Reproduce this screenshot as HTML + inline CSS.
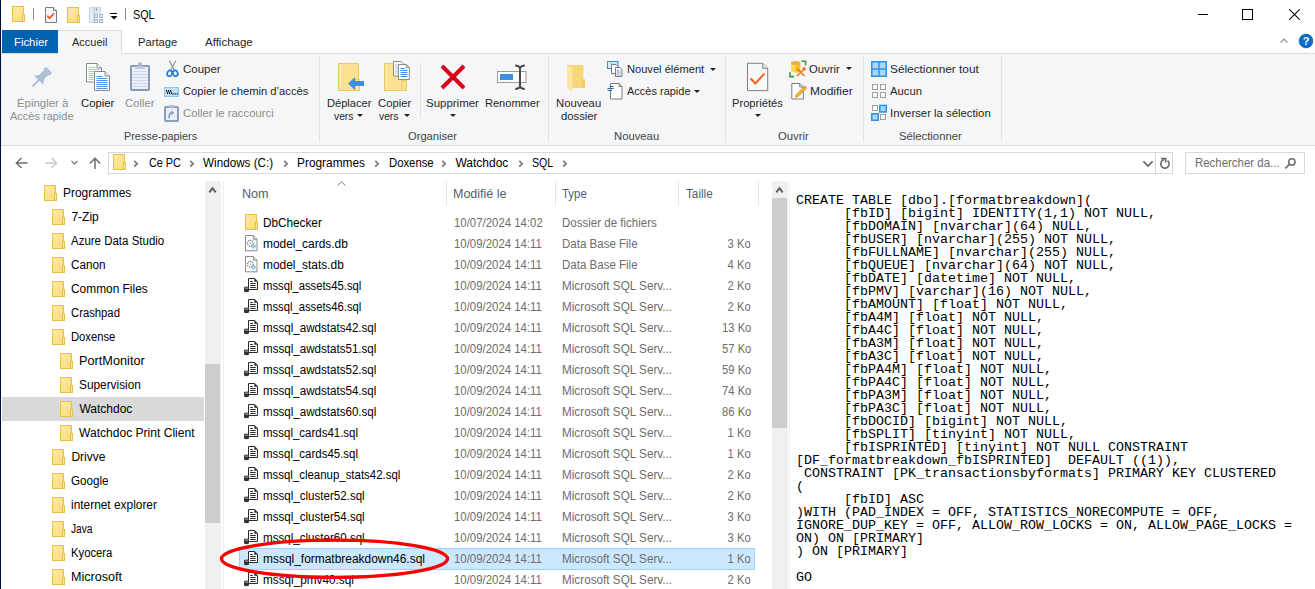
<!DOCTYPE html><html><head><meta charset="utf-8"><style>html,body{margin:0;padding:0;}body{width:1315px;height:589px;overflow:hidden;position:relative;background:#fff;font-family:"Liberation Sans", sans-serif;}.t{position:absolute;white-space:nowrap;}.r{position:absolute;}.s{position:absolute;overflow:visible;}</style></head><body>
<svg width="0" height="0" style="position:absolute"><defs><linearGradient id="fg" x1="0" y1="0" x2="1" y2="1"><stop offset="0" stop-color="#FFEAA6"/><stop offset="1" stop-color="#FCDB7A"/></linearGradient></defs></svg>
<div class="r" style="left:0px;top:0px;width:1px;height:589px;background:#001138;"></div>
<svg class="s" style="left:12px;top:6px" width="13" height="16" viewBox="0 0 13 16"><rect x="0.5" y="0.5" width="11" height="15" fill="url(#fg)" stroke="#E6C04E"/><rect x="10.5" y="8.5" width="2" height="7" fill="#FDE7A2" stroke="#E6C04E"/></svg>
<div class="r" style="left:33px;top:8px;width:1px;height:12px;background:#8c8c8c;"></div>
<svg class="s" style="left:45px;top:7px" width="12" height="16" viewBox="0 0 12 16"><path d="M0.5 0.5h8l3 3v12h-11z" fill="#F4F6F8" stroke="#7a7a7a"/><path d="M8.5 0.5v3h3" fill="#fff" stroke="#7a7a7a"/><path d="M2.3 8.8l2.2 2.4 4.6-5" fill="none" stroke="#E8531E" stroke-width="1.6"/></svg>
<svg class="s" style="left:67px;top:7px" width="13" height="16" viewBox="0 0 13 16"><rect x="0.5" y="0.5" width="11" height="15" fill="url(#fg)" stroke="#E6C04E"/><rect x="10.5" y="8.5" width="2" height="7" fill="#FDE7A2" stroke="#E6C04E"/></svg>
<svg class="s" style="left:89px;top:7px" width="14" height="16" viewBox="0 0 14 16"><rect x="0.5" y="0.5" width="4.5" height="15" fill="#E4EBF5" stroke="#C9D4E4"/><rect x="5.5" y="0.5" width="6" height="5.5" fill="#E4EBF5" stroke="#C9D4E4"/><circle cx="7.5" cy="2.5" r="0.9" fill="#7486A8"/><rect x="5.5" y="7.5" width="3" height="3" fill="#E4EBF5" stroke="#A7B5CB"/><rect x="10.5" y="7.5" width="3" height="3" fill="#E4EBF5" stroke="#A7B5CB"/><rect x="5.5" y="12.5" width="3" height="3" fill="#E4EBF5" stroke="#A7B5CB"/><rect x="10.5" y="12.5" width="3" height="3" fill="#E4EBF5" stroke="#A7B5CB"/></svg>
<div class="r" style="left:110px;top:13px;width:7px;height:1px;background:#000;"></div>
<svg class="s" style="left:110px;top:16px" width="8" height="4" viewBox="0 0 8 4"><path d="M0.5 0h7l-3.5 3.5z" fill="#000"/></svg>
<div class="r" style="left:125px;top:8px;width:1px;height:12px;background:#8c8c8c;"></div>
<div class="t" style="left:133px;top:9px;font-size:12px;line-height:12px;color:#000;transform:scaleX(0.9);transform-origin:left top;">SQL</div>
<div class="r" style="left:1198px;top:14px;width:10px;height:1px;background:#000;"></div>
<svg class="s" style="left:1242px;top:9px" width="11" height="11" viewBox="0 0 11 11"><rect x="0.5" y="0.5" width="10" height="10" fill="none" stroke="#000"/></svg>
<svg class="s" style="left:1289px;top:9px" width="11" height="11" viewBox="0 0 11 11"><path d="M0.3 0.3l10.4 10.4M10.7 0.3l-10.4 10.4" stroke="#000" stroke-width="1.05"/></svg>
<div class="r" style="left:2px;top:30px;width:56px;height:23px;background:#0063B1;"></div>
<div class="t" style="left:13.6px;top:37px;font-size:11.5px;line-height:11.5px;color:#fff;transform:scaleX(0.985);transform-origin:left top;">Fichier</div>
<div class="r" style="left:58px;top:30px;width:64px;height:24px;background:#F5F6F7;box-sizing:border-box;border:1px solid #DADBDC;border-bottom:none;border-left:none;"></div>
<div class="t" style="left:72.4px;top:37px;font-size:11.5px;line-height:11.5px;color:#262626;transform:scaleX(0.954);transform-origin:left top;">Accueil</div>
<div class="t" style="left:137.5px;top:37px;font-size:11.5px;line-height:11.5px;color:#262626;transform:scaleX(0.972);transform-origin:left top;">Partage</div>
<div class="t" style="left:205px;top:37px;font-size:11.5px;line-height:11.5px;color:#262626;">Affichage</div>
<svg class="s" style="left:1280px;top:38px" width="10" height="7" viewBox="0 0 10 7"><path d="M0.5 4.6L4 1.1L7.5 4.6" fill="none" stroke="#8a8a8a" stroke-width="1.1"/></svg>
<svg class="s" style="left:1299px;top:34px" width="14" height="14" viewBox="0 0 14 14"><circle cx="7" cy="7" r="6.9" fill="#0A6CCB" stroke="#0558A8" stroke-width="0.6"/><text x="7" y="11.2" font-family="Liberation Sans" font-weight="bold" font-size="11" text-anchor="middle" fill="#fff">?</text></svg>
<div class="r" style="left:1px;top:53px;width:1314px;height:93px;background:#F5F6F7;"></div>
<div class="r" style="left:2px;top:53px;width:56px;height:1px;background:#DADBDC;"></div>
<div class="r" style="left:122px;top:53px;width:1193px;height:1px;background:#DADBDC;"></div>
<div class="r" style="left:1px;top:145px;width:1314px;height:1px;background:#DADBDC;"></div>
<div class="r" style="left:319px;top:56px;width:1px;height:86px;background:#E2E3E4;"></div>
<div class="r" style="left:548px;top:56px;width:1px;height:86px;background:#E2E3E4;"></div>
<div class="r" style="left:725px;top:56px;width:1px;height:86px;background:#E2E3E4;"></div>
<div class="r" style="left:863px;top:56px;width:1px;height:86px;background:#E2E3E4;"></div>
<div class="r" style="left:1001px;top:56px;width:1px;height:86px;background:#E2E3E4;"></div>
<div class="r" style="left:420px;top:63px;width:1px;height:55px;background:#E2E3E4;"></div>
<svg class="s" style="left:30px;top:64px" width="24" height="26" viewBox="0 0 24 26"><g transform="translate(18.8,6.05) rotate(45)" fill="#AFBFD5"><rect x="-4.4" y="-0.3" width="8.8" height="4" rx="1.2"/><path d="M-3.3 3.5H3.3V9.8L6.4 14.4H-6.4L-3.3 9.8z"/><rect x="-1.05" y="14" width="2.1" height="9" rx="0.6"/></g></svg>
<div class="t" style="left:16.5px;top:98px;font-size:11.5px;line-height:11.5px;color:#8D8D8D;transform:scaleX(0.9918);transform-origin:left top;">Épingler à</div>
<div class="t" style="left:10px;top:111px;font-size:11.5px;line-height:11.5px;color:#8D8D8D;transform:scaleX(0.9553);transform-origin:left top;">Accès rapide</div>
<svg class="s" style="left:86px;top:63px" width="24" height="28" viewBox="0 0 24 28"><path d="M0.5 0.5h10.5l4.5 4.5v14h-15z" fill="#fff" stroke="#8a8a8a"/><path d="M11 0.5v4.5h4.5" fill="#eee" stroke="#8a8a8a"/><path d="M2.5 4.5h7M2.5 6.5h11M2.5 8.5h11M2.5 10.5h11M2.5 12.5h11M2.5 14.5h11M2.5 16.5h11" stroke="#A9C7EE" stroke-width="1"/><path d="M8.5 8.5h10.5l4.5 4.5v14.5h-15z" fill="#fff" stroke="#8a8a8a"/><path d="M19 8.5v4.5h4.5" fill="#eee" stroke="#8a8a8a"/><path d="M10.5 13.5h6M10.5 15.5h11M10.5 17.5h11M10.5 19.5h11M10.5 21.5h11M10.5 23.5h11M10.5 25.5h11" stroke="#4E8FE6" stroke-width="1"/></svg>
<div class="t" style="left:80.5px;top:98px;font-size:11.5px;line-height:11.5px;color:#1a1a1a;transform:scaleX(0.9814);transform-origin:left top;">Copier</div>
<svg class="s" style="left:130px;top:62px" width="20" height="29" viewBox="0 0 20 29"><rect x="1" y="4" width="18" height="24" rx="0.8" fill="#E9F0FA" stroke="#8899B8" stroke-width="2"/><path d="M2.5 9.5h15M2.5 12.5h15M2.5 15.5h15M2.5 18.5h15M2.5 21.5h15M2.5 24.5h15" stroke="#C9D3E3" stroke-width="0.9"/><path d="M4.3 7L7.3 3.8H12.7L15.7 7z" fill="#C0CBDD"/><rect x="8" y="0.6" width="4" height="3.6" rx="1.6" fill="#A5B4CC"/></svg>
<div class="t" style="left:124.5px;top:98px;font-size:11.5px;line-height:11.5px;color:#8D8D8D;transform:scaleX(0.9814);transform-origin:left top;">Coller</div>
<svg class="s" style="left:166px;top:60px" width="13" height="18" viewBox="0 0 13 18"><path d="M3.2 0.6L8.6 10.8M9.8 0.6L4.4 10.8" stroke="#999" stroke-width="1.3"/><ellipse cx="3.7" cy="13.4" rx="2.4" ry="2.9" transform="rotate(25 3.7 13.4)" fill="none" stroke="#1E7BD4" stroke-width="1.7"/><ellipse cx="9.3" cy="13.4" rx="2.4" ry="2.9" transform="rotate(-25 9.3 13.4)" fill="none" stroke="#1E7BD4" stroke-width="1.7"/></svg>
<div class="t" style="left:183px;top:64px;font-size:11.5px;line-height:11.5px;color:#262626;transform:scaleX(0.997);transform-origin:left top;">Couper</div>
<svg class="s" style="left:164px;top:87px" width="15" height="10" viewBox="0 0 15 10"><rect x="0.5" y="0.5" width="14" height="9" fill="#BFE0FA" stroke="#94C4EE"/><path d="M2.3 3l1.5 4.2M4.3 3l1.5 4.2M6.3 3l1.5 4.2" stroke="#111" stroke-width="1"/><path d="M8.5 6.8h1.2M10.6 6.8h1.2M12.7 6.8h1.2" stroke="#111" stroke-width="1.2"/></svg>
<div class="t" style="left:183px;top:86px;font-size:11.5px;line-height:11.5px;color:#262626;transform:scaleX(0.9761);transform-origin:left top;">Copier le chemin d’accès</div>
<svg class="s" style="left:164px;top:105px" width="15" height="17" viewBox="0 0 15 17"><rect x="1" y="2" width="13" height="14" rx="1" fill="#E7EEF7" stroke="#8C9DBB" stroke-width="2"/><rect x="4.5" y="0.3" width="6" height="2.7" fill="#A9B7CE"/><path d="M5.2 13.2v-2.2c0-2 1-3.2 3.3-3.2" fill="none" stroke="#8C9DBB" stroke-width="1.6"/><path d="M7.2 5.4L10.4 7.8 7.2 10.2z" fill="#8C9DBB"/></svg>
<div class="t" style="left:183px;top:108px;font-size:11.5px;line-height:11.5px;color:#8D8D8D;transform:scaleX(0.9866);transform-origin:left top;">Coller le raccourci</div>
<div class="t" style="left:123.5px;top:131px;font-size:11.5px;line-height:11.5px;color:#444444;transform:scaleX(0.9448);transform-origin:left top;">Presse-papiers</div>
<svg class="s" style="left:338px;top:63px" width="27" height="29" viewBox="0 0 27 29"><rect x="0.5" y="0.5" width="20" height="27" fill="#FCE28E" stroke="#EACB6A"/><rect x="17.5" y="16.5" width="4" height="11" fill="#FBE59F" stroke="#EACB6A"/><path d="M2.5 2.5v23" stroke="#FFF2C4"/><path d="M10 20.5l7-6.5v4h9v5h-9v4z" fill="#3D8EE0"/></svg>
<div class="t" style="left:326.5px;top:98px;font-size:11.5px;line-height:11.5px;color:#262626;transform:scaleX(0.9657);transform-origin:left top;">Déplacer</div>
<div class="t" style="left:334.4px;top:111px;font-size:11.5px;line-height:11.5px;color:#262626;transform:scaleX(0.8926);transform-origin:left top;">vers</div>
<svg class="s" style="left:357px;top:114px" width="6" height="3" viewBox="0 0 6 3"><path d="M0 0h6l-3 3z" fill="#222"/></svg>
<svg class="s" style="left:384px;top:60px" width="27" height="32" viewBox="0 0 27 32"><rect x="0.5" y="3.5" width="18" height="27" fill="#FCE28E" stroke="#EACB6A"/><rect x="18" y="20.5" width="4.5" height="10" fill="#FBE08A" stroke="#EACB6A"/><path d="M2.5 5.5v23" stroke="#FFF2C4"/><path d="M9.5 1.5h7.8l3 3v11.5h-10.8z" fill="#fff" stroke="#8a8a8a"/><path d="M11 5h4M11 7h4M11 9h4M11 11h4M11 13h4" stroke="#A9C7EE"/><path d="M14.5 4.5h7.8l3 3v12h-10.8z" fill="#fff" stroke="#8a8a8a"/><path d="M22.3 4.5v3h3" fill="none" stroke="#8a8a8a"/><path d="M16.5 8.5h4M16.5 10.5h7M16.5 12.5h7M16.5 14.5h7M16.5 16.5h7" stroke="#3D85E6"/></svg>
<div class="t" style="left:377.5px;top:98px;font-size:11.5px;line-height:11.5px;color:#262626;transform:scaleX(0.9814);transform-origin:left top;">Copier</div>
<div class="t" style="left:379px;top:111px;font-size:11.5px;line-height:11.5px;color:#262626;transform:scaleX(0.8926);transform-origin:left top;">vers</div>
<svg class="s" style="left:404px;top:114px" width="6" height="3" viewBox="0 0 6 3"><path d="M0 0h6l-3 3z" fill="#222"/></svg>
<svg class="s" style="left:440px;top:64px" width="26" height="26" viewBox="0 0 26 26"><path d="M2 2L24 24M24 2L2 24" stroke="#D8001C" stroke-width="4"/></svg>
<div class="t" style="left:426px;top:98px;font-size:11.5px;line-height:11.5px;color:#262626;transform:scaleX(0.997);transform-origin:left top;">Supprimer</div>
<svg class="s" style="left:450px;top:114px" width="6" height="3" viewBox="0 0 6 3"><path d="M0 0h6l-3 3z" fill="#222"/></svg>
<svg class="s" style="left:497px;top:64px" width="30" height="27" viewBox="0 0 30 27"><rect x="0.5" y="7.5" width="28.5" height="11" fill="#fff" stroke="#9a9a9a"/><rect x="3" y="10" width="13" height="6" fill="#3D8EE0"/><path d="M18.2 1.6c2.2 0 3.6 0.7 4.8 2.1c1.2-1.4 2.6-2.1 4.8-2.1M23 3.6v19.4M18.2 25.1c2.2 0 3.6-0.7 4.8-2.1c1.2 1.4 2.6 2.1 4.8 2.1" fill="none" stroke="#4a4a4a" stroke-width="2"/></svg>
<div class="t" style="left:484.5px;top:98px;font-size:11.5px;line-height:11.5px;color:#262626;transform:scaleX(0.9605);transform-origin:left top;">Renommer</div>
<div class="t" style="left:407.6px;top:131px;font-size:11.5px;line-height:11.5px;color:#444444;transform:scaleX(0.9709);transform-origin:left top;">Organiser</div>
<svg class="s" style="left:566px;top:64px" width="20" height="28" viewBox="0 0 20 28"><rect x="1" y="1" width="16.3" height="23" fill="#F7D878"/><rect x="16" y="15.2" width="3" height="8.8" fill="#F1CF66"/><path d="M1 1L7 5.5V24L5.6 27.2L1 24z" fill="#FCE6A3"/><path d="M7 5.5V24" stroke="#F0D070" stroke-width="0.6"/></svg>
<div class="t" style="left:555.6px;top:98px;font-size:11.5px;line-height:11.5px;color:#262626;transform:scaleX(0.9814);transform-origin:left top;">Nouveau</div>
<div class="t" style="left:560.6px;top:111px;font-size:11.5px;line-height:11.5px;color:#262626;transform:scaleX(0.9814);transform-origin:left top;">dossier</div>
<svg class="s" style="left:607px;top:61px" width="16" height="16" viewBox="0 0 16 16"><rect x="0.5" y="0.5" width="10.5" height="7" fill="#D6E9F5" stroke="#3A8DC5"/><path d="M4.5 0.5v7" stroke="#8fbfe0"/><path d="M4.5 3.5h4.5l2 2v7h-6.5z" fill="#fff" stroke="#7a7a7a"/><path d="M8.5 6.5h4.5l2 2v7h-6.5z" fill="#fff" stroke="#7a7a7a"/><path d="M9.5 10h5M9.5 12h5M9.5 14h5" stroke="#8fb8e8"/><path d="M10.8 8v7" stroke="#E58FA8" stroke-width="0.8"/></svg>
<div class="t" style="left:626.6px;top:64px;font-size:11.5px;line-height:11.5px;color:#262626;transform:scaleX(0.9657);transform-origin:left top;">Nouvel élément</div>
<svg class="s" style="left:710px;top:68px" width="6" height="3" viewBox="0 0 6 3"><path d="M0 0h6l-3 3z" fill="#222"/></svg>
<svg class="s" style="left:607px;top:83px" width="16" height="17" viewBox="0 0 16 17"><path d="M3.5 0.5h8.5l3 3v12.5h-11.5z" fill="#fff" stroke="#7a7a7a"/><path d="M12 0.5v3h3" fill="none" stroke="#7a7a7a"/><path d="M2.5 3.5h4M0.5 5.5h6M0.5 7.5h4.5" stroke="#1a65b8" stroke-width="1.1"/><path d="M3.5 1.5v13" stroke="#777" stroke-width="0.6"/></svg>
<div class="t" style="left:626.6px;top:86px;font-size:11.5px;line-height:11.5px;color:#262626;transform:scaleX(0.9553);transform-origin:left top;">Accès rapide</div>
<svg class="s" style="left:694px;top:90px" width="6" height="3" viewBox="0 0 6 3"><path d="M0 0h6l-3 3z" fill="#222"/></svg>
<div class="t" style="left:613.7px;top:131px;font-size:11.5px;line-height:11.5px;color:#444444;transform:scaleX(0.9814);transform-origin:left top;">Nouveau</div>
<svg class="s" style="left:747px;top:62px" width="22" height="30" viewBox="0 0 22 30"><path d="M0.5 1.3h15.2l5 5v22.3h-20.2z" fill="#F8F8F8" stroke="#808080"/><path d="M15.7 1.3v5h5" fill="#e8e8e8" stroke="#808080"/><path d="M3.6 16.4l4.8 5 9-9.8" fill="none" stroke="#F26522" stroke-width="2.1"/></svg>
<div class="t" style="left:732px;top:98px;font-size:11.5px;line-height:11.5px;color:#262626;transform:scaleX(0.9709);transform-origin:left top;">Propriétés</div>
<svg class="s" style="left:755px;top:114px" width="6" height="3" viewBox="0 0 6 3"><path d="M0 0h6l-3 3z" fill="#222"/></svg>
<svg class="s" style="left:789px;top:60px" width="18" height="18" viewBox="0 0 18 18"><path d="M2 3v7.5c0 1.2 2.1 2.2 4.65 2.2s4.65-1 4.65-2.2V3z" fill="#FFD84A"/><path d="M6.65 3v9.7c2.55 0 4.65-1 4.65-2.2V3z" fill="#F2C02C"/><ellipse cx="6.65" cy="3" rx="4.65" ry="2" fill="#EFAE3A"/><path d="M12.3 1.3H16.6V5.6M0.9 12.3V16.6H5.2" fill="none" stroke="#3A9C3A" stroke-width="1.6"/><path d="M8 8.5l7.5 7.5M15.5 8.5L8 16" stroke="#F07A1A" stroke-width="1.7"/><path d="M14 7.5l2.5 2.5" stroke="#F07A1A" stroke-width="2.6"/></svg>
<div class="t" style="left:809px;top:64px;font-size:11.5px;line-height:11.5px;color:#262626;transform:scaleX(0.9814);transform-origin:left top;">Ouvrir</div>
<svg class="s" style="left:846px;top:67px" width="6" height="3" viewBox="0 0 6 3"><path d="M0 0h6l-3 3z" fill="#222"/></svg>
<svg class="s" style="left:791px;top:83px" width="16" height="17" viewBox="0 0 16 17"><path d="M0.8 0.5h8l3.5 3.5v12h-11.5z" fill="#fff" stroke="#7a7a7a"/><path d="M8.8 0.5v3.5h3.5" fill="none" stroke="#7a7a7a"/><path d="M4.3 14.4l0.9-3 7.9-7.9 2.1 2.1-7.9 7.9z" fill="#F5B730" stroke="#B08020" stroke-width="0.6"/><path d="M13.1 3.5l2.1 2.1 0.8-0.8-2.1-2.1z" fill="#E8708A"/></svg>
<div class="t" style="left:809.8px;top:86px;font-size:11.5px;line-height:11.5px;color:#262626;transform:scaleX(1.044);transform-origin:left top;">Modifier</div>
<div class="t" style="left:777.7px;top:131px;font-size:11.5px;line-height:11.5px;color:#444444;transform:scaleX(0.9814);transform-origin:left top;">Ouvrir</div>
<svg class="s" style="left:871px;top:61px" width="16" height="16" viewBox="0 0 16 16"><rect x="0" y="0" width="16" height="16" fill="#2F8FE0"/><rect x="1.5" y="1.5" width="5.8" height="5.8" fill="#A9D6FB"/><rect x="8.7" y="1.5" width="5.8" height="5.8" fill="#A9D6FB"/><rect x="1.5" y="8.7" width="5.8" height="5.8" fill="#A9D6FB"/><rect x="8.7" y="8.7" width="5.8" height="5.8" fill="#A9D6FB"/></svg>
<div class="t" style="left:890.2px;top:64px;font-size:11.5px;line-height:11.5px;color:#262626;transform:scaleX(1.0283);transform-origin:left top;">Sélectionner tout</div>
<svg class="s" style="left:872px;top:84px" width="15" height="15" viewBox="0 0 15 15"><rect x="0.5" y="0.5" width="5" height="5" fill="#fafafa" stroke="#A0A0A0"/><rect x="8.5" y="0.5" width="5" height="5" fill="#fafafa" stroke="#A0A0A0"/><rect x="0.5" y="8.5" width="5" height="5" fill="#fafafa" stroke="#A0A0A0"/><rect x="8.5" y="8.5" width="5" height="5" fill="#fafafa" stroke="#A0A0A0"/></svg>
<div class="t" style="left:890px;top:86px;font-size:11.5px;line-height:11.5px;color:#262626;transform:scaleX(0.9814);transform-origin:left top;">Aucun</div>
<svg class="s" style="left:871px;top:104px" width="17" height="17" viewBox="0 0 17 17"><rect x="1.5" y="1.5" width="5" height="5" fill="#fafafa" stroke="#A0A0A0"/><rect x="8" y="0.7" width="8" height="8" fill="#2F8FE0"/><rect x="9.5" y="2.2" width="5" height="5" fill="#A9D6FB"/><rect x="0" y="9" width="8" height="8" fill="#2F8FE0"/><rect x="1.5" y="10.5" width="5" height="5" fill="#A9D6FB"/><rect x="9.5" y="10.5" width="5" height="5" fill="#fafafa" stroke="#A0A0A0"/></svg>
<div class="t" style="left:890px;top:108px;font-size:11.5px;line-height:11.5px;color:#262626;transform:scaleX(0.9845);transform-origin:left top;">Inverser la sélection</div>
<div class="t" style="left:899px;top:131px;font-size:11.5px;line-height:11.5px;color:#444444;transform:scaleX(0.9814);transform-origin:left top;">Sélectionner</div>
<svg class="s" style="left:15px;top:157px" width="13" height="12" viewBox="0 0 13 12"><path d="M12.5 6H1.5M6.5 1L1.3 6l5.2 5" fill="none" stroke="#6d6d6d" stroke-width="1.4"/></svg>
<svg class="s" style="left:45px;top:157px" width="13" height="12" viewBox="0 0 13 12"><path d="M0.5 6h11M6.5 1l5.2 5-5.2 5" fill="none" stroke="#C8C8C8" stroke-width="1.4"/></svg>
<svg class="s" style="left:71px;top:160px" width="7" height="5" viewBox="0 0 7 5"><path d="M0.5 0.8l3 3 3-3" fill="none" stroke="#6d6d6d" stroke-width="1.2"/></svg>
<svg class="s" style="left:89px;top:157px" width="12" height="12" viewBox="0 0 12 12"><path d="M6 12V1.5M0.8 6.5L6 1.3l5.2 5.2" fill="none" stroke="#6d6d6d" stroke-width="1.5"/></svg>
<div class="r" style="left:108px;top:152px;width:1065px;height:22px;background:#fff;box-sizing:border-box;border:1px solid #D9D9D9;"></div>
<div class="r" style="left:1155px;top:153px;width:1px;height:20px;background:#D9D9D9;"></div>
<svg class="s" style="left:113px;top:154px" width="13" height="16" viewBox="0 0 13 16"><rect x="0.5" y="0.5" width="11" height="15" fill="url(#fg)" stroke="#E6C04E"/><rect x="10.5" y="8.5" width="2" height="7" fill="#FDE7A2" stroke="#E6C04E"/></svg>
<svg class="s" style="left:133px;top:159.7px" width="6" height="7" viewBox="0 0 6 7"><path d="M1.2 0.8l3 2.9-3 2.9" fill="none" stroke="#7a7a7a" stroke-width="1.7"/></svg>
<svg class="s" style="left:188.5px;top:159.7px" width="6" height="7" viewBox="0 0 6 7"><path d="M1.2 0.8l3 2.9-3 2.9" fill="none" stroke="#7a7a7a" stroke-width="1.7"/></svg>
<svg class="s" style="left:282.5px;top:159.7px" width="6" height="7" viewBox="0 0 6 7"><path d="M1.2 0.8l3 2.9-3 2.9" fill="none" stroke="#7a7a7a" stroke-width="1.7"/></svg>
<svg class="s" style="left:373.5px;top:159.7px" width="6" height="7" viewBox="0 0 6 7"><path d="M1.2 0.8l3 2.9-3 2.9" fill="none" stroke="#7a7a7a" stroke-width="1.7"/></svg>
<svg class="s" style="left:440.5px;top:159.7px" width="6" height="7" viewBox="0 0 6 7"><path d="M1.2 0.8l3 2.9-3 2.9" fill="none" stroke="#7a7a7a" stroke-width="1.7"/></svg>
<svg class="s" style="left:517.5px;top:159.7px" width="6" height="7" viewBox="0 0 6 7"><path d="M1.2 0.8l3 2.9-3 2.9" fill="none" stroke="#7a7a7a" stroke-width="1.7"/></svg>
<svg class="s" style="left:561.5px;top:159.7px" width="6" height="7" viewBox="0 0 6 7"><path d="M1.2 0.8l3 2.9-3 2.9" fill="none" stroke="#7a7a7a" stroke-width="1.7"/></svg>
<div class="t" style="left:148.5px;top:157px;font-size:12px;line-height:12px;color:#000;transform:scaleX(0.9);transform-origin:left top;">Ce PC</div>
<div class="t" style="left:203.3px;top:157px;font-size:12px;line-height:12px;color:#000;transform:scaleX(0.974);transform-origin:left top;">Windows (C:)</div>
<div class="t" style="left:297.4px;top:157px;font-size:12px;line-height:12px;color:#000;transform:scaleX(0.99);transform-origin:left top;">Programmes</div>
<div class="t" style="left:388.6px;top:157px;font-size:12px;line-height:12px;color:#000;transform:scaleX(0.943);transform-origin:left top;">Doxense</div>
<div class="t" style="left:455.4px;top:157px;font-size:12px;line-height:12px;color:#000;">Watchdoc</div>
<div class="t" style="left:532.1px;top:157px;font-size:12px;line-height:12px;color:#000;transform:scaleX(0.88);transform-origin:left top;">SQL</div>
<svg class="s" style="left:1142px;top:160px" width="12" height="8" viewBox="0 0 12 8"><path d="M1.4 1.4l4.6 4.6 4.6-4.6" fill="none" stroke="#6a6a6a" stroke-width="1.7"/></svg>
<svg class="s" style="left:1158px;top:155px" width="13" height="14" viewBox="0 0 13 14"><path d="M9.6 5.7A4.2 4.2 0 1 1 6.2 4.8" fill="none" stroke="#6a6a6a" stroke-width="1.6"/><path d="M3.1 3.6H7.7V7.6" fill="none" stroke="#6a6a6a" stroke-width="1.6"/></svg>
<div class="r" style="left:1185px;top:152px;width:120px;height:22px;background:#fff;box-sizing:border-box;border:1px solid #D9D9D9;"></div>
<div class="t" style="left:1194.5px;top:157px;font-size:12px;line-height:12px;color:#6d6d6d;transform:scaleX(0.953);transform-origin:left top;">Rechercher da...</div>
<svg class="s" style="left:1284px;top:156px" width="13" height="13" viewBox="0 0 13 13"><circle cx="7.85" cy="5.9" r="3.15" fill="none" stroke="#6d6d6d" stroke-width="1.5"/><path d="M5.6 8.2L1.3 12.5" stroke="#6d6d6d" stroke-width="1.7"/></svg>
<div class="r" style="left:2px;top:397px;width:202px;height:24px;background:#D9D9D9;"></div>
<svg class="s" style="left:44px;top:185px" width="13" height="16" viewBox="0 0 13 16"><rect x="0.5" y="0.5" width="11" height="15" fill="url(#fg)" stroke="#E6C04E"/><rect x="10.5" y="8.5" width="2" height="7" fill="#FDE7A2" stroke="#E6C04E"/></svg>
<div class="t" style="left:63.4px;top:187px;font-size:12px;line-height:12px;color:#000;transform:scaleX(0.994);transform-origin:left top;">Programmes</div>
<svg class="s" style="left:52px;top:209px" width="13" height="16" viewBox="0 0 13 16"><rect x="0.5" y="0.5" width="11" height="15" fill="url(#fg)" stroke="#E6C04E"/><rect x="10.5" y="8.5" width="2" height="7" fill="#FDE7A2" stroke="#E6C04E"/></svg>
<div class="t" style="left:71.4px;top:211px;font-size:12px;line-height:12px;color:#000;">7-Zip</div>
<svg class="s" style="left:52px;top:233px" width="13" height="16" viewBox="0 0 13 16"><rect x="0.5" y="0.5" width="11" height="15" fill="url(#fg)" stroke="#E6C04E"/><rect x="10.5" y="8.5" width="2" height="7" fill="#FDE7A2" stroke="#E6C04E"/></svg>
<div class="t" style="left:71.4px;top:235px;font-size:12px;line-height:12px;color:#000;transform:scaleX(0.957);transform-origin:left top;">Azure Data Studio</div>
<svg class="s" style="left:52px;top:257px" width="13" height="16" viewBox="0 0 13 16"><rect x="0.5" y="0.5" width="11" height="15" fill="url(#fg)" stroke="#E6C04E"/><rect x="10.5" y="8.5" width="2" height="7" fill="#FDE7A2" stroke="#E6C04E"/></svg>
<div class="t" style="left:71.4px;top:259px;font-size:12px;line-height:12px;color:#000;transform:scaleX(0.98);transform-origin:left top;">Canon</div>
<svg class="s" style="left:52px;top:281px" width="13" height="16" viewBox="0 0 13 16"><rect x="0.5" y="0.5" width="11" height="15" fill="url(#fg)" stroke="#E6C04E"/><rect x="10.5" y="8.5" width="2" height="7" fill="#FDE7A2" stroke="#E6C04E"/></svg>
<div class="t" style="left:71.4px;top:283px;font-size:12px;line-height:12px;color:#000;transform:scaleX(0.992);transform-origin:left top;">Common Files</div>
<svg class="s" style="left:52px;top:305px" width="13" height="16" viewBox="0 0 13 16"><rect x="0.5" y="0.5" width="11" height="15" fill="url(#fg)" stroke="#E6C04E"/><rect x="10.5" y="8.5" width="2" height="7" fill="#FDE7A2" stroke="#E6C04E"/></svg>
<div class="t" style="left:71.4px;top:307px;font-size:12px;line-height:12px;color:#000;transform:scaleX(0.94);transform-origin:left top;">Crashpad</div>
<svg class="s" style="left:52px;top:329px" width="13" height="16" viewBox="0 0 13 16"><rect x="0.5" y="0.5" width="11" height="15" fill="url(#fg)" stroke="#E6C04E"/><rect x="10.5" y="8.5" width="2" height="7" fill="#FDE7A2" stroke="#E6C04E"/></svg>
<div class="t" style="left:71.4px;top:331px;font-size:12px;line-height:12px;color:#000;transform:scaleX(0.937);transform-origin:left top;">Doxense</div>
<svg class="s" style="left:60px;top:353px" width="13" height="16" viewBox="0 0 13 16"><rect x="0.5" y="0.5" width="11" height="15" fill="url(#fg)" stroke="#E6C04E"/><rect x="10.5" y="8.5" width="2" height="7" fill="#FDE7A2" stroke="#E6C04E"/></svg>
<div class="t" style="left:79.4px;top:355px;font-size:12px;line-height:12px;color:#000;transform:scaleX(1.06);transform-origin:left top;">PortMonitor</div>
<svg class="s" style="left:60px;top:377px" width="13" height="16" viewBox="0 0 13 16"><rect x="0.5" y="0.5" width="11" height="15" fill="url(#fg)" stroke="#E6C04E"/><rect x="10.5" y="8.5" width="2" height="7" fill="#FDE7A2" stroke="#E6C04E"/></svg>
<div class="t" style="left:79.4px;top:379px;font-size:12px;line-height:12px;color:#000;transform:scaleX(0.987);transform-origin:left top;">Supervision</div>
<svg class="s" style="left:60px;top:401px" width="13" height="16" viewBox="0 0 13 16"><rect x="0.5" y="0.5" width="11" height="15" fill="url(#fg)" stroke="#E6C04E"/><rect x="10.5" y="8.5" width="2" height="7" fill="#FDE7A2" stroke="#E6C04E"/></svg>
<div class="t" style="left:79.4px;top:403px;font-size:12px;line-height:12px;color:#000;">Watchdoc</div>
<svg class="s" style="left:60px;top:425px" width="13" height="16" viewBox="0 0 13 16"><rect x="0.5" y="0.5" width="11" height="15" fill="url(#fg)" stroke="#E6C04E"/><rect x="10.5" y="8.5" width="2" height="7" fill="#FDE7A2" stroke="#E6C04E"/></svg>
<div class="t" style="left:79.4px;top:427px;font-size:12px;line-height:12px;color:#000;transform:scaleX(1.005);transform-origin:left top;">Watchdoc Print Client</div>
<svg class="s" style="left:52px;top:449px" width="13" height="16" viewBox="0 0 13 16"><rect x="0.5" y="0.5" width="11" height="15" fill="url(#fg)" stroke="#E6C04E"/><rect x="10.5" y="8.5" width="2" height="7" fill="#FDE7A2" stroke="#E6C04E"/></svg>
<div class="t" style="left:71.4px;top:451px;font-size:12px;line-height:12px;color:#000;">Drivve</div>
<svg class="s" style="left:52px;top:473px" width="13" height="16" viewBox="0 0 13 16"><rect x="0.5" y="0.5" width="11" height="15" fill="url(#fg)" stroke="#E6C04E"/><rect x="10.5" y="8.5" width="2" height="7" fill="#FDE7A2" stroke="#E6C04E"/></svg>
<div class="t" style="left:71.4px;top:475px;font-size:12px;line-height:12px;color:#000;transform:scaleX(0.972);transform-origin:left top;">Google</div>
<svg class="s" style="left:52px;top:497px" width="13" height="16" viewBox="0 0 13 16"><rect x="0.5" y="0.5" width="11" height="15" fill="url(#fg)" stroke="#E6C04E"/><rect x="10.5" y="8.5" width="2" height="7" fill="#FDE7A2" stroke="#E6C04E"/></svg>
<div class="t" style="left:71.4px;top:499px;font-size:12px;line-height:12px;color:#000;transform:scaleX(0.991);transform-origin:left top;">internet explorer</div>
<svg class="s" style="left:52px;top:521px" width="13" height="16" viewBox="0 0 13 16"><rect x="0.5" y="0.5" width="11" height="15" fill="url(#fg)" stroke="#E6C04E"/><rect x="10.5" y="8.5" width="2" height="7" fill="#FDE7A2" stroke="#E6C04E"/></svg>
<div class="t" style="left:71.4px;top:523px;font-size:12px;line-height:12px;color:#000;transform:scaleX(0.84);transform-origin:left top;">Java</div>
<svg class="s" style="left:52px;top:545px" width="13" height="16" viewBox="0 0 13 16"><rect x="0.5" y="0.5" width="11" height="15" fill="url(#fg)" stroke="#E6C04E"/><rect x="10.5" y="8.5" width="2" height="7" fill="#FDE7A2" stroke="#E6C04E"/></svg>
<div class="t" style="left:71.4px;top:547px;font-size:12px;line-height:12px;color:#000;transform:scaleX(0.94);transform-origin:left top;">Kyocera</div>
<svg class="s" style="left:52px;top:569px" width="13" height="16" viewBox="0 0 13 16"><rect x="0.5" y="0.5" width="11" height="15" fill="url(#fg)" stroke="#E6C04E"/><rect x="10.5" y="8.5" width="2" height="7" fill="#FDE7A2" stroke="#E6C04E"/></svg>
<div class="t" style="left:71.4px;top:571px;font-size:12px;line-height:12px;color:#000;transform:scaleX(1.05);transform-origin:left top;">Microsoft</div>
<div class="r" style="left:205px;top:181px;width:16px;height:408px;background:#F0F0F0;"></div>
<div class="r" style="left:205px;top:364px;width:15px;height:159px;background:#CDCDCD;"></div>
<svg class="s" style="left:208px;top:186px" width="10" height="8" viewBox="0 0 10 8"><path d="M1.3 6.3L4.5 2.1L7.7 6.3" fill="none" stroke="#606060" stroke-width="2"/></svg>
<div class="r" style="left:223px;top:181px;width:1px;height:408px;background:#F0F0F0;"></div>
<div class="t" style="left:242.3px;top:188px;font-size:12px;line-height:12px;color:#4C607A;transform:scaleX(1.05);transform-origin:left top;">Nom</div>
<svg class="s" style="left:337px;top:181px" width="9" height="5" viewBox="0 0 9 5"><path d="M0.6 4.6L4.5 0.8l3.9 3.8" fill="none" stroke="#7a7a7a" stroke-width="1"/></svg>
<div class="r" style="left:446px;top:181px;width:1px;height:25px;background:#E5E5E5;"></div>
<div class="r" style="left:555px;top:181px;width:1px;height:25px;background:#E5E5E5;"></div>
<div class="r" style="left:678px;top:181px;width:1px;height:25px;background:#E5E5E5;"></div>
<div class="r" style="left:758px;top:181px;width:1px;height:25px;background:#E5E5E5;"></div>
<div class="t" style="left:453.4px;top:188px;font-size:12px;line-height:12px;color:#4C607A;transform:scaleX(1.04);transform-origin:left top;">Modifié le</div>
<div class="t" style="left:562.3px;top:188px;font-size:12px;line-height:12px;color:#4C607A;transform:scaleX(0.954);transform-origin:left top;">Type</div>
<div class="t" style="left:685.5px;top:188px;font-size:12px;line-height:12px;color:#4C607A;transform:scaleX(0.978);transform-origin:left top;">Taille</div>
<div class="r" style="left:239px;top:548px;width:516px;height:22px;background:#CCE8FF;box-sizing:border-box;border:1px solid #99D1FF;"></div>
<svg class="s" style="left:245px;top:214px" width="13" height="16" viewBox="0 0 13 16"><rect x="0.5" y="0.5" width="11" height="15" fill="url(#fg)" stroke="#E6C04E"/><rect x="10.5" y="8.5" width="2" height="7" fill="#FDE7A2" stroke="#E6C04E"/></svg>
<div class="t" style="left:263.3px;top:217px;font-size:12px;line-height:12px;color:#000;transform:scaleX(0.98);transform-origin:left top;">DbChecker</div>
<div class="t" style="left:453.5px;top:217px;font-size:12px;line-height:12px;color:#6D6D6D;transform:scaleX(0.95);transform-origin:left top;">10/07/2024 14:02</div>
<div class="t" style="left:562.3px;top:217px;font-size:12px;line-height:12px;color:#6D6D6D;transform:scaleX(0.96);transform-origin:left top;">Dossier de fichiers</div>
<svg class="s" style="left:245px;top:235px" width="13" height="17" viewBox="0 0 13 17"><path d="M0.5 0.5h7.8l3.7 3.7v11.6h-11.5z" fill="#fff" stroke="#8a8a8a"/><path d="M8.3 0.5v3.7h3.7" fill="#e8e8e8" stroke="#8a8a8a"/><circle cx="5.3" cy="8.2" r="2.9" fill="none" stroke="#808080" stroke-width="1.3" stroke-dasharray="1.3 0.9"/><circle cx="5.3" cy="8.2" r="1" fill="#bbb"/><circle cx="8.4" cy="11.3" r="1.9" fill="#9ddcea" stroke="#6a9ccc" stroke-width="0.9" stroke-dasharray="1 0.6"/></svg>
<div class="t" style="left:263.3px;top:238px;font-size:12px;line-height:12px;color:#000;transform:scaleX(0.993);transform-origin:left top;">model_cards.db</div>
<div class="t" style="left:453.5px;top:238px;font-size:12px;line-height:12px;color:#6D6D6D;transform:scaleX(0.95);transform-origin:left top;">10/09/2024 14:11</div>
<div class="t" style="left:562.3px;top:238px;font-size:12px;line-height:12px;color:#6D6D6D;transform:scaleX(0.96);transform-origin:left top;">Data Base File</div>
<div class="t" style="right:564px;top:238px;font-size:12px;line-height:12px;color:#6D6D6D;transform:scaleX(0.935);transform-origin:right top;">3 Ko</div>
<svg class="s" style="left:245px;top:256px" width="13" height="17" viewBox="0 0 13 17"><path d="M0.5 0.5h7.8l3.7 3.7v11.6h-11.5z" fill="#fff" stroke="#8a8a8a"/><path d="M8.3 0.5v3.7h3.7" fill="#e8e8e8" stroke="#8a8a8a"/><circle cx="5.3" cy="8.2" r="2.9" fill="none" stroke="#808080" stroke-width="1.3" stroke-dasharray="1.3 0.9"/><circle cx="5.3" cy="8.2" r="1" fill="#bbb"/><circle cx="8.4" cy="11.3" r="1.9" fill="#9ddcea" stroke="#6a9ccc" stroke-width="0.9" stroke-dasharray="1 0.6"/></svg>
<div class="t" style="left:263.3px;top:259px;font-size:12px;line-height:12px;color:#000;transform:scaleX(0.993);transform-origin:left top;">model_stats.db</div>
<div class="t" style="left:453.5px;top:259px;font-size:12px;line-height:12px;color:#6D6D6D;transform:scaleX(0.95);transform-origin:left top;">10/09/2024 14:11</div>
<div class="t" style="left:562.3px;top:259px;font-size:12px;line-height:12px;color:#6D6D6D;transform:scaleX(0.96);transform-origin:left top;">Data Base File</div>
<div class="t" style="right:564px;top:259px;font-size:12px;line-height:12px;color:#6D6D6D;transform:scaleX(0.935);transform-origin:right top;">4 Ko</div>
<svg class="s" style="left:244px;top:278px" width="14" height="15" viewBox="0 0 14 15"><path d="M4.5 0.5h6.2l2.8 2.8v8.2h-9z" fill="#fff" stroke="#2a2a2a"/><path d="M10.3 0.3v3.4h3.4z" fill="#2a2a2a"/><path d="M6.2 3.5h2.6M6.2 5.5h5.5M6.2 7.5h5.5M6.2 9.5h5.5" stroke="#2a2a2a" stroke-width="1"/><path d="M0 9Q2.5 8.2 5 9V13.6Q2.5 14.7 0 13.6z" fill="#333"/><path d="M0.8 10.1h3.4" stroke="#b0b0b0" stroke-width="1"/></svg>
<div class="t" style="left:263.3px;top:280px;font-size:12px;line-height:12px;color:#000;transform:scaleX(0.939);transform-origin:left top;">mssql_assets45.sql</div>
<div class="t" style="left:453.5px;top:280px;font-size:12px;line-height:12px;color:#6D6D6D;transform:scaleX(0.95);transform-origin:left top;">10/09/2024 14:11</div>
<div class="t" style="left:562.3px;top:280px;font-size:12px;line-height:12px;color:#6D6D6D;transform:scaleX(0.977);transform-origin:left top;">Microsoft SQL Serv...</div>
<div class="t" style="right:564px;top:280px;font-size:12px;line-height:12px;color:#6D6D6D;transform:scaleX(0.935);transform-origin:right top;">2 Ko</div>
<svg class="s" style="left:244px;top:299px" width="14" height="15" viewBox="0 0 14 15"><path d="M4.5 0.5h6.2l2.8 2.8v8.2h-9z" fill="#fff" stroke="#2a2a2a"/><path d="M10.3 0.3v3.4h3.4z" fill="#2a2a2a"/><path d="M6.2 3.5h2.6M6.2 5.5h5.5M6.2 7.5h5.5M6.2 9.5h5.5" stroke="#2a2a2a" stroke-width="1"/><path d="M0 9Q2.5 8.2 5 9V13.6Q2.5 14.7 0 13.6z" fill="#333"/><path d="M0.8 10.1h3.4" stroke="#b0b0b0" stroke-width="1"/></svg>
<div class="t" style="left:263.3px;top:301px;font-size:12px;line-height:12px;color:#000;transform:scaleX(0.939);transform-origin:left top;">mssql_assets46.sql</div>
<div class="t" style="left:453.5px;top:301px;font-size:12px;line-height:12px;color:#6D6D6D;transform:scaleX(0.95);transform-origin:left top;">10/09/2024 14:11</div>
<div class="t" style="left:562.3px;top:301px;font-size:12px;line-height:12px;color:#6D6D6D;transform:scaleX(0.977);transform-origin:left top;">Microsoft SQL Serv...</div>
<div class="t" style="right:564px;top:301px;font-size:12px;line-height:12px;color:#6D6D6D;transform:scaleX(0.935);transform-origin:right top;">2 Ko</div>
<svg class="s" style="left:244px;top:320px" width="14" height="15" viewBox="0 0 14 15"><path d="M4.5 0.5h6.2l2.8 2.8v8.2h-9z" fill="#fff" stroke="#2a2a2a"/><path d="M10.3 0.3v3.4h3.4z" fill="#2a2a2a"/><path d="M6.2 3.5h2.6M6.2 5.5h5.5M6.2 7.5h5.5M6.2 9.5h5.5" stroke="#2a2a2a" stroke-width="1"/><path d="M0 9Q2.5 8.2 5 9V13.6Q2.5 14.7 0 13.6z" fill="#333"/><path d="M0.8 10.1h3.4" stroke="#b0b0b0" stroke-width="1"/></svg>
<div class="t" style="left:263.3px;top:322px;font-size:12px;line-height:12px;color:#000;transform:scaleX(0.966);transform-origin:left top;">mssql_awdstats42.sql</div>
<div class="t" style="left:453.5px;top:322px;font-size:12px;line-height:12px;color:#6D6D6D;transform:scaleX(0.95);transform-origin:left top;">10/09/2024 14:11</div>
<div class="t" style="left:562.3px;top:322px;font-size:12px;line-height:12px;color:#6D6D6D;transform:scaleX(0.977);transform-origin:left top;">Microsoft SQL Serv...</div>
<div class="t" style="right:564px;top:322px;font-size:12px;line-height:12px;color:#6D6D6D;transform:scaleX(0.935);transform-origin:right top;">13 Ko</div>
<svg class="s" style="left:244px;top:341px" width="14" height="15" viewBox="0 0 14 15"><path d="M4.5 0.5h6.2l2.8 2.8v8.2h-9z" fill="#fff" stroke="#2a2a2a"/><path d="M10.3 0.3v3.4h3.4z" fill="#2a2a2a"/><path d="M6.2 3.5h2.6M6.2 5.5h5.5M6.2 7.5h5.5M6.2 9.5h5.5" stroke="#2a2a2a" stroke-width="1"/><path d="M0 9Q2.5 8.2 5 9V13.6Q2.5 14.7 0 13.6z" fill="#333"/><path d="M0.8 10.1h3.4" stroke="#b0b0b0" stroke-width="1"/></svg>
<div class="t" style="left:263.3px;top:343px;font-size:12px;line-height:12px;color:#000;transform:scaleX(0.966);transform-origin:left top;">mssql_awdstats51.sql</div>
<div class="t" style="left:453.5px;top:343px;font-size:12px;line-height:12px;color:#6D6D6D;transform:scaleX(0.95);transform-origin:left top;">10/09/2024 14:11</div>
<div class="t" style="left:562.3px;top:343px;font-size:12px;line-height:12px;color:#6D6D6D;transform:scaleX(0.977);transform-origin:left top;">Microsoft SQL Serv...</div>
<div class="t" style="right:564px;top:343px;font-size:12px;line-height:12px;color:#6D6D6D;transform:scaleX(0.935);transform-origin:right top;">57 Ko</div>
<svg class="s" style="left:244px;top:362px" width="14" height="15" viewBox="0 0 14 15"><path d="M4.5 0.5h6.2l2.8 2.8v8.2h-9z" fill="#fff" stroke="#2a2a2a"/><path d="M10.3 0.3v3.4h3.4z" fill="#2a2a2a"/><path d="M6.2 3.5h2.6M6.2 5.5h5.5M6.2 7.5h5.5M6.2 9.5h5.5" stroke="#2a2a2a" stroke-width="1"/><path d="M0 9Q2.5 8.2 5 9V13.6Q2.5 14.7 0 13.6z" fill="#333"/><path d="M0.8 10.1h3.4" stroke="#b0b0b0" stroke-width="1"/></svg>
<div class="t" style="left:263.3px;top:364px;font-size:12px;line-height:12px;color:#000;transform:scaleX(0.966);transform-origin:left top;">mssql_awdstats52.sql</div>
<div class="t" style="left:453.5px;top:364px;font-size:12px;line-height:12px;color:#6D6D6D;transform:scaleX(0.95);transform-origin:left top;">10/09/2024 14:11</div>
<div class="t" style="left:562.3px;top:364px;font-size:12px;line-height:12px;color:#6D6D6D;transform:scaleX(0.977);transform-origin:left top;">Microsoft SQL Serv...</div>
<div class="t" style="right:564px;top:364px;font-size:12px;line-height:12px;color:#6D6D6D;transform:scaleX(0.935);transform-origin:right top;">59 Ko</div>
<svg class="s" style="left:244px;top:383px" width="14" height="15" viewBox="0 0 14 15"><path d="M4.5 0.5h6.2l2.8 2.8v8.2h-9z" fill="#fff" stroke="#2a2a2a"/><path d="M10.3 0.3v3.4h3.4z" fill="#2a2a2a"/><path d="M6.2 3.5h2.6M6.2 5.5h5.5M6.2 7.5h5.5M6.2 9.5h5.5" stroke="#2a2a2a" stroke-width="1"/><path d="M0 9Q2.5 8.2 5 9V13.6Q2.5 14.7 0 13.6z" fill="#333"/><path d="M0.8 10.1h3.4" stroke="#b0b0b0" stroke-width="1"/></svg>
<div class="t" style="left:263.3px;top:385px;font-size:12px;line-height:12px;color:#000;transform:scaleX(0.966);transform-origin:left top;">mssql_awdstats54.sql</div>
<div class="t" style="left:453.5px;top:385px;font-size:12px;line-height:12px;color:#6D6D6D;transform:scaleX(0.95);transform-origin:left top;">10/09/2024 14:11</div>
<div class="t" style="left:562.3px;top:385px;font-size:12px;line-height:12px;color:#6D6D6D;transform:scaleX(0.977);transform-origin:left top;">Microsoft SQL Serv...</div>
<div class="t" style="right:564px;top:385px;font-size:12px;line-height:12px;color:#6D6D6D;transform:scaleX(0.935);transform-origin:right top;">74 Ko</div>
<svg class="s" style="left:244px;top:404px" width="14" height="15" viewBox="0 0 14 15"><path d="M4.5 0.5h6.2l2.8 2.8v8.2h-9z" fill="#fff" stroke="#2a2a2a"/><path d="M10.3 0.3v3.4h3.4z" fill="#2a2a2a"/><path d="M6.2 3.5h2.6M6.2 5.5h5.5M6.2 7.5h5.5M6.2 9.5h5.5" stroke="#2a2a2a" stroke-width="1"/><path d="M0 9Q2.5 8.2 5 9V13.6Q2.5 14.7 0 13.6z" fill="#333"/><path d="M0.8 10.1h3.4" stroke="#b0b0b0" stroke-width="1"/></svg>
<div class="t" style="left:263.3px;top:406px;font-size:12px;line-height:12px;color:#000;transform:scaleX(0.966);transform-origin:left top;">mssql_awdstats60.sql</div>
<div class="t" style="left:453.5px;top:406px;font-size:12px;line-height:12px;color:#6D6D6D;transform:scaleX(0.95);transform-origin:left top;">10/09/2024 14:11</div>
<div class="t" style="left:562.3px;top:406px;font-size:12px;line-height:12px;color:#6D6D6D;transform:scaleX(0.977);transform-origin:left top;">Microsoft SQL Serv...</div>
<div class="t" style="right:564px;top:406px;font-size:12px;line-height:12px;color:#6D6D6D;transform:scaleX(0.935);transform-origin:right top;">86 Ko</div>
<svg class="s" style="left:244px;top:425px" width="14" height="15" viewBox="0 0 14 15"><path d="M4.5 0.5h6.2l2.8 2.8v8.2h-9z" fill="#fff" stroke="#2a2a2a"/><path d="M10.3 0.3v3.4h3.4z" fill="#2a2a2a"/><path d="M6.2 3.5h2.6M6.2 5.5h5.5M6.2 7.5h5.5M6.2 9.5h5.5" stroke="#2a2a2a" stroke-width="1"/><path d="M0 9Q2.5 8.2 5 9V13.6Q2.5 14.7 0 13.6z" fill="#333"/><path d="M0.8 10.1h3.4" stroke="#b0b0b0" stroke-width="1"/></svg>
<div class="t" style="left:263.3px;top:427px;font-size:12px;line-height:12px;color:#000;transform:scaleX(0.956);transform-origin:left top;">mssql_cards41.sql</div>
<div class="t" style="left:453.5px;top:427px;font-size:12px;line-height:12px;color:#6D6D6D;transform:scaleX(0.95);transform-origin:left top;">10/09/2024 14:11</div>
<div class="t" style="left:562.3px;top:427px;font-size:12px;line-height:12px;color:#6D6D6D;transform:scaleX(0.977);transform-origin:left top;">Microsoft SQL Serv...</div>
<div class="t" style="right:564px;top:427px;font-size:12px;line-height:12px;color:#6D6D6D;transform:scaleX(0.935);transform-origin:right top;">1 Ko</div>
<svg class="s" style="left:244px;top:446px" width="14" height="15" viewBox="0 0 14 15"><path d="M4.5 0.5h6.2l2.8 2.8v8.2h-9z" fill="#fff" stroke="#2a2a2a"/><path d="M10.3 0.3v3.4h3.4z" fill="#2a2a2a"/><path d="M6.2 3.5h2.6M6.2 5.5h5.5M6.2 7.5h5.5M6.2 9.5h5.5" stroke="#2a2a2a" stroke-width="1"/><path d="M0 9Q2.5 8.2 5 9V13.6Q2.5 14.7 0 13.6z" fill="#333"/><path d="M0.8 10.1h3.4" stroke="#b0b0b0" stroke-width="1"/></svg>
<div class="t" style="left:263.3px;top:448px;font-size:12px;line-height:12px;color:#000;transform:scaleX(0.956);transform-origin:left top;">mssql_cards45.sql</div>
<div class="t" style="left:453.5px;top:448px;font-size:12px;line-height:12px;color:#6D6D6D;transform:scaleX(0.95);transform-origin:left top;">10/09/2024 14:11</div>
<div class="t" style="left:562.3px;top:448px;font-size:12px;line-height:12px;color:#6D6D6D;transform:scaleX(0.977);transform-origin:left top;">Microsoft SQL Serv...</div>
<div class="t" style="right:564px;top:448px;font-size:12px;line-height:12px;color:#6D6D6D;transform:scaleX(0.935);transform-origin:right top;">1 Ko</div>
<svg class="s" style="left:244px;top:467px" width="14" height="15" viewBox="0 0 14 15"><path d="M4.5 0.5h6.2l2.8 2.8v8.2h-9z" fill="#fff" stroke="#2a2a2a"/><path d="M10.3 0.3v3.4h3.4z" fill="#2a2a2a"/><path d="M6.2 3.5h2.6M6.2 5.5h5.5M6.2 7.5h5.5M6.2 9.5h5.5" stroke="#2a2a2a" stroke-width="1"/><path d="M0 9Q2.5 8.2 5 9V13.6Q2.5 14.7 0 13.6z" fill="#333"/><path d="M0.8 10.1h3.4" stroke="#b0b0b0" stroke-width="1"/></svg>
<div class="t" style="left:263.3px;top:469px;font-size:12px;line-height:12px;color:#000;transform:scaleX(0.953);transform-origin:left top;">mssql_cleanup_stats42.sql</div>
<div class="t" style="left:453.5px;top:469px;font-size:12px;line-height:12px;color:#6D6D6D;transform:scaleX(0.95);transform-origin:left top;">10/09/2024 14:11</div>
<div class="t" style="left:562.3px;top:469px;font-size:12px;line-height:12px;color:#6D6D6D;transform:scaleX(0.977);transform-origin:left top;">Microsoft SQL Serv...</div>
<div class="t" style="right:564px;top:469px;font-size:12px;line-height:12px;color:#6D6D6D;transform:scaleX(0.935);transform-origin:right top;">2 Ko</div>
<svg class="s" style="left:244px;top:488px" width="14" height="15" viewBox="0 0 14 15"><path d="M4.5 0.5h6.2l2.8 2.8v8.2h-9z" fill="#fff" stroke="#2a2a2a"/><path d="M10.3 0.3v3.4h3.4z" fill="#2a2a2a"/><path d="M6.2 3.5h2.6M6.2 5.5h5.5M6.2 7.5h5.5M6.2 9.5h5.5" stroke="#2a2a2a" stroke-width="1"/><path d="M0 9Q2.5 8.2 5 9V13.6Q2.5 14.7 0 13.6z" fill="#333"/><path d="M0.8 10.1h3.4" stroke="#b0b0b0" stroke-width="1"/></svg>
<div class="t" style="left:263.3px;top:490px;font-size:12px;line-height:12px;color:#000;transform:scaleX(0.965);transform-origin:left top;">mssql_cluster52.sql</div>
<div class="t" style="left:453.5px;top:490px;font-size:12px;line-height:12px;color:#6D6D6D;transform:scaleX(0.95);transform-origin:left top;">10/09/2024 14:11</div>
<div class="t" style="left:562.3px;top:490px;font-size:12px;line-height:12px;color:#6D6D6D;transform:scaleX(0.977);transform-origin:left top;">Microsoft SQL Serv...</div>
<div class="t" style="right:564px;top:490px;font-size:12px;line-height:12px;color:#6D6D6D;transform:scaleX(0.935);transform-origin:right top;">2 Ko</div>
<svg class="s" style="left:244px;top:509px" width="14" height="15" viewBox="0 0 14 15"><path d="M4.5 0.5h6.2l2.8 2.8v8.2h-9z" fill="#fff" stroke="#2a2a2a"/><path d="M10.3 0.3v3.4h3.4z" fill="#2a2a2a"/><path d="M6.2 3.5h2.6M6.2 5.5h5.5M6.2 7.5h5.5M6.2 9.5h5.5" stroke="#2a2a2a" stroke-width="1"/><path d="M0 9Q2.5 8.2 5 9V13.6Q2.5 14.7 0 13.6z" fill="#333"/><path d="M0.8 10.1h3.4" stroke="#b0b0b0" stroke-width="1"/></svg>
<div class="t" style="left:263.3px;top:511px;font-size:12px;line-height:12px;color:#000;transform:scaleX(0.965);transform-origin:left top;">mssql_cluster54.sql</div>
<div class="t" style="left:453.5px;top:511px;font-size:12px;line-height:12px;color:#6D6D6D;transform:scaleX(0.95);transform-origin:left top;">10/09/2024 14:11</div>
<div class="t" style="left:562.3px;top:511px;font-size:12px;line-height:12px;color:#6D6D6D;transform:scaleX(0.977);transform-origin:left top;">Microsoft SQL Serv...</div>
<div class="t" style="right:564px;top:511px;font-size:12px;line-height:12px;color:#6D6D6D;transform:scaleX(0.935);transform-origin:right top;">3 Ko</div>
<svg class="s" style="left:244px;top:530px" width="14" height="15" viewBox="0 0 14 15"><path d="M4.5 0.5h6.2l2.8 2.8v8.2h-9z" fill="#fff" stroke="#2a2a2a"/><path d="M10.3 0.3v3.4h3.4z" fill="#2a2a2a"/><path d="M6.2 3.5h2.6M6.2 5.5h5.5M6.2 7.5h5.5M6.2 9.5h5.5" stroke="#2a2a2a" stroke-width="1"/><path d="M0 9Q2.5 8.2 5 9V13.6Q2.5 14.7 0 13.6z" fill="#333"/><path d="M0.8 10.1h3.4" stroke="#b0b0b0" stroke-width="1"/></svg>
<div class="t" style="left:263.3px;top:532px;font-size:12px;line-height:12px;color:#000;transform:scaleX(0.965);transform-origin:left top;">mssql_cluster60.sql</div>
<div class="t" style="left:453.5px;top:532px;font-size:12px;line-height:12px;color:#6D6D6D;transform:scaleX(0.95);transform-origin:left top;">10/09/2024 14:11</div>
<div class="t" style="left:562.3px;top:532px;font-size:12px;line-height:12px;color:#6D6D6D;transform:scaleX(0.977);transform-origin:left top;">Microsoft SQL Serv...</div>
<div class="t" style="right:564px;top:532px;font-size:12px;line-height:12px;color:#6D6D6D;transform:scaleX(0.935);transform-origin:right top;">3 Ko</div>
<svg class="s" style="left:244px;top:551px" width="14" height="15" viewBox="0 0 14 15"><path d="M4.5 0.5h6.2l2.8 2.8v8.2h-9z" fill="#fff" stroke="#2a2a2a"/><path d="M10.3 0.3v3.4h3.4z" fill="#2a2a2a"/><path d="M6.2 3.5h2.6M6.2 5.5h5.5M6.2 7.5h5.5M6.2 9.5h5.5" stroke="#2a2a2a" stroke-width="1"/><path d="M0 9Q2.5 8.2 5 9V13.6Q2.5 14.7 0 13.6z" fill="#333"/><path d="M0.8 10.1h3.4" stroke="#b0b0b0" stroke-width="1"/></svg>
<div class="t" style="left:263.3px;top:553px;font-size:12px;line-height:12px;color:#000;transform:scaleX(0.995);transform-origin:left top;">mssql_formatbreakdown46.sql</div>
<div class="t" style="left:453.5px;top:553px;font-size:12px;line-height:12px;color:#6D6D6D;transform:scaleX(0.95);transform-origin:left top;">10/09/2024 14:11</div>
<div class="t" style="left:562.3px;top:553px;font-size:12px;line-height:12px;color:#6D6D6D;transform:scaleX(0.977);transform-origin:left top;">Microsoft SQL Serv...</div>
<div class="t" style="right:564px;top:553px;font-size:12px;line-height:12px;color:#6D6D6D;transform:scaleX(0.935);transform-origin:right top;">1 Ko</div>
<svg class="s" style="left:244px;top:572px" width="14" height="15" viewBox="0 0 14 15"><path d="M4.5 0.5h6.2l2.8 2.8v8.2h-9z" fill="#fff" stroke="#2a2a2a"/><path d="M10.3 0.3v3.4h3.4z" fill="#2a2a2a"/><path d="M6.2 3.5h2.6M6.2 5.5h5.5M6.2 7.5h5.5M6.2 9.5h5.5" stroke="#2a2a2a" stroke-width="1"/><path d="M0 9Q2.5 8.2 5 9V13.6Q2.5 14.7 0 13.6z" fill="#333"/><path d="M0.8 10.1h3.4" stroke="#b0b0b0" stroke-width="1"/></svg>
<div class="t" style="left:263.3px;top:574px;font-size:12px;line-height:12px;color:#000;transform:scaleX(0.98);transform-origin:left top;">mssql_pmv40.sql</div>
<div class="t" style="left:453.5px;top:574px;font-size:12px;line-height:12px;color:#6D6D6D;transform:scaleX(0.95);transform-origin:left top;">10/09/2024 14:11</div>
<div class="t" style="left:562.3px;top:574px;font-size:12px;line-height:12px;color:#6D6D6D;transform:scaleX(0.977);transform-origin:left top;">Microsoft SQL Serv...</div>
<div class="t" style="right:564px;top:574px;font-size:12px;line-height:12px;color:#6D6D6D;transform:scaleX(0.935);transform-origin:right top;">2 Ko</div>
<div class="r" style="left:772px;top:181px;width:16px;height:408px;background:#F0F0F0;"></div>
<div class="r" style="left:772px;top:198px;width:15px;height:230px;background:#CDCDCD;"></div>
<svg class="s" style="left:775px;top:186px" width="10" height="8" viewBox="0 0 10 8"><path d="M1.3 6.3L4.5 2.1L7.7 6.3" fill="none" stroke="#606060" stroke-width="2"/></svg>
<div class="r" style="left:789px;top:181px;width:1px;height:408px;background:#F0F0F0;"></div>
<svg class="s" style="left:218px;top:537px" width="234" height="43" viewBox="0 0 234 43"><ellipse cx="116.5" cy="21.7" rx="113" ry="18.6" fill="none" stroke="#F80000" stroke-width="3.3"/></svg>
<pre style="position:absolute;left:796px;top:194px;margin:0;font-family:'Liberation Mono',monospace;font-size:13.333px;line-height:13px;color:#000;">CREATE TABLE [dbo].[formatbreakdown](
      [fbID] [bigint] IDENTITY(1,1) NOT NULL,
      [fbDOMAIN] [nvarchar](64) NULL,
      [fbUSER] [nvarchar](255) NOT NULL,
      [fbFULLNAME] [nvarchar](255) NULL,
      [fbQUEUE] [nvarchar](64) NOT NULL,
      [fbDATE] [datetime] NOT NULL,
      [fbPMV] [varchar](16) NOT NULL,
      [fbAMOUNT] [float] NOT NULL,
      [fbA4M] [float] NOT NULL,
      [fbA4C] [float] NOT NULL,
      [fbA3M] [float] NOT NULL,
      [fbA3C] [float] NOT NULL,
      [fbPA4M] [float] NOT NULL,
      [fbPA4C] [float] NOT NULL,
      [fbPA3M] [float] NOT NULL,
      [fbPA3C] [float] NOT NULL,
      [fbDOCID] [bigint] NOT NULL,
      [fbSPLIT] [tinyint] NOT NULL,
      [fbISPRINTED] [tinyint] NOT NULL CONSTRAINT
[DF_formatbreakdown_fbISPRINTED]  DEFAULT ((1)),
 CONSTRAINT [PK_transactionsbyformats] PRIMARY KEY CLUSTERED
(
      [fbID] ASC
)WITH (PAD_INDEX = OFF, STATISTICS_NORECOMPUTE = OFF,
IGNORE_DUP_KEY = OFF, ALLOW_ROW_LOCKS = ON, ALLOW_PAGE_LOCKS =
ON) ON [PRIMARY]
) ON [PRIMARY]

GO</pre>
</body></html>
